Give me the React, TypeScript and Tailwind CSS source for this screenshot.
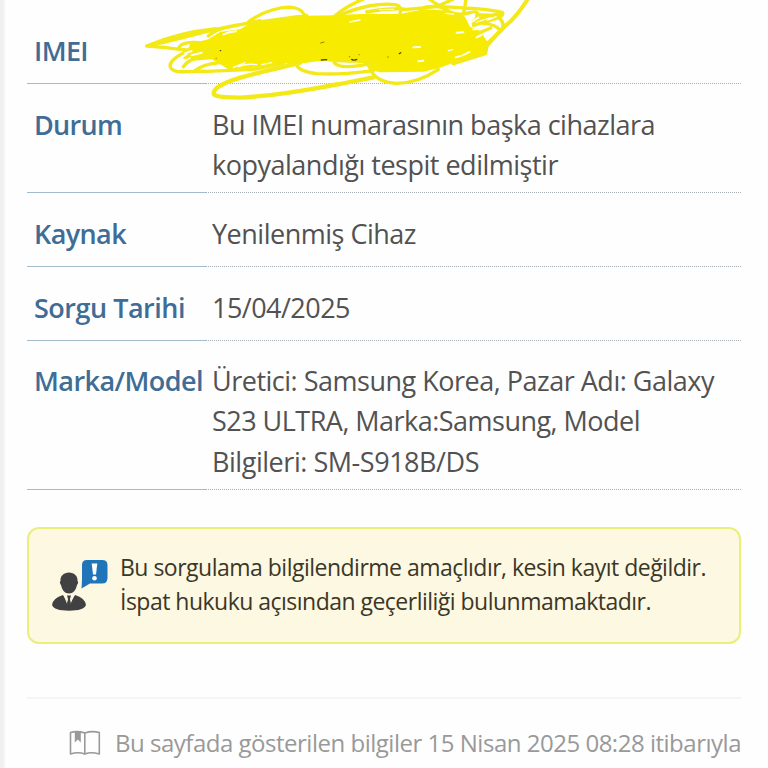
import React from "react";

type RowProps = { label: string; labelWidth: number; height: string; pad: string; lines: { text: string; width: number }[] };

// Text stretched or squeezed to a fixed measure
function Fit({ text, width }: { text: string; width: number }) {
  const ref = React.useRef<HTMLSpanElement>(null);
  const [spacing, setSpacing] = React.useState(0);
  React.useLayoutEffect(() => {
    if (ref.current) {
      setSpacing((width - ref.current.getBoundingClientRect().width) / text.length);
    }
  }, [text, width]);
  return (
    <span ref={ref} className="inline-block whitespace-nowrap" style={{ letterSpacing: spacing }}>
      {text}
    </span>
  );
}

function Row({ label, labelWidth, height, pad, lines }: RowProps) {
  return (
    <div className={`flex text-[27px] leading-[40px] ${height}`}>
      <div className={`w-[179px] border-b border-[#a3bccd] pl-[7px] font-semibold text-[#3f6d96] ${pad}`}>
        <Fit text={label} width={labelWidth} />
      </div>
      <div className={`flex-1 border-b border-dotted border-[#a3adb3] pl-[6px] text-[#525252] ${pad}`}>
        {lines.map((l) => (
          <div key={l.text} className="h-[40.4px]">
            <Fit text={l.text} width={l.width} />
          </div>
        ))}
      </div>
    </div>
  );
}

function Scribble() {
  return (
    <svg className="absolute left-[140px] top-0" width="400" height="104" viewBox="0 0 1200 312" fill="none" stroke="#f3e916" strokeWidth="10" strokeLinecap="round" strokeLinejoin="round">
      <path fill="#f7ec00" stroke="none" d="M150 132L205 118L240 96L300 88L330 70L420 58L500 47L580 46L660 42L780 42L850 28L930 32L975 50L990 80L1020 92L1042 125L1040 162L985 172L900 203L850 215L720 217L690 210L672 190L620 186L545 182L470 192L420 190L340 203L265 208L240 192L215 178L160 182L140 160Z" />
      <path d="M228 86C160 93 90 108 20 138C70 140 105 148 150 150M20 138C110 122 200 90 300 74L500 46M325 66C370 32 430 16 465 24Q490 30 494 50M118 140Q130 124 180 128M205 108Q225 90 260 82L360 62M150 150C110 166 80 190 94 206S140 212 200 214L340 208L430 190M135 175Q165 152 215 148M130 200Q150 172 210 165M165 212Q190 192 240 188" />
      <path strokeWidth="13" d="M480 188C380 215 270 232 230 264C208 288 225 293 300 293C430 286 520 265 600 252L700 232" />
      <path d="M470 196Q480 216 530 221C600 225 650 218 700 212M580 182Q584 200 620 200T700 188M560 178Q600 185 670 182M690 205C700 230 725 248 770 250C830 250 870 225 895 208" />
      <path d="M585 48C610 24 640 10 672 -4M600 46C660 18 725 8 765 14Q788 18 780 42M680 36Q760 22 800 28L890 20L945 -5M865 -5C890 15 925 30 960 64M905 20L1010 26Q1070 32 1088 38Q1092 50 1060 58L1000 76M978 -5L974 25L965 60M840 26Q890 10 920 30T990 38T1000 70M1010 45Q1065 42 1080 56T1085 90L1042 130M1088 42Q1040 45 1000 64M1010 102L1052 84M1030 70Q1065 72 1080 90" />
      <path strokeWidth="12" d="M1165 -5C1140 34 1118 62 1095 78Q1068 105 1040 138L1036 160L940 190" />
      <g stroke="#fffef2" strokeWidth="6">
        <path d="M250 103Q268 96 288 94M135 160L155 153M155 166L185 158M112 196Q120 184 138 179M152 198L172 187M820 142L840 141M950 98L970 97M1000 88L1017 87M835 184L850 182M948 172Q968 168 988 156M995 66L1015 53M1010 112L1024 105" />
        <path strokeWidth="4" d="M295 200Q320 190 350 194M365 194L395 188M280 202L315 188M630 66L660 60M720 29L760 28M1042 60Q1060 54 1068 50M918 40L940 42M980 50L985 65M925 152L938 149" />
      </g>
      <g stroke="#514b17" strokeWidth="4">
        <path d="M241 152h1M544 180L560 179M635 178Q642 183 650 178M778 161L782 158" />
        <path strokeWidth="2" d="M228 175h1M542 129L552 126M628 170h1M657 164h1M743 171h2" />
      </g>
    </svg>
  );
}

function AdvisorIcon() {
  return (
    <svg className="mt-[29px] shrink-0" width="56" height="54" viewBox="52 558 56 54">
      <path fill="#2075b9" d="M87 560H102Q107.500 560 107.500 565V578Q107.500 583.500 102 583.500H90L81.500 588.500L82 580V565Q82 560 87 560Z" />
      <path fill="#fff" d="M91.700 563.500H97.300L96 574.500H93Z" />
      <circle cx="94.500" cy="578.300" r="2.300" fill="#fff" />
      <path fill="#414143" d="M69 572.500C74 572.500 78 576 77.500 581Q79 582 77 585C76 590 73 593.500 69 593.500S62 590 61 585Q59 582 60.500 581C60 576 64 572.500 69 572.500Z" />
      <path fill="#414143" d="M63 595L69 604L75 595Q85 598 86 605Q84 610.700 69 610.700T52 605Q53 598 63 595Z" />
      <path fill="#fff8e0" d="M63.500 595L66 595L67.500 605ZM74.500 595L72 595L70 605Z" />
      <path fill="#414143" d="M67 595.500H71L70 599L71 606L69 609L67 606L68 599Z" />
    </svg>
  );
}

function BookIcon() {
  return (
    <svg className="mr-[14px] mt-[30px] shrink-0" width="32" height="28" viewBox="69 729 32 28" fill="none" stroke="#999" strokeWidth="1.6" strokeLinejoin="round">
      <path d="M84.800 733Q77 730.500 70.500 732.500V754Q78 751.500 84.800 754Q91 751.500 99.300 754V732.500Q92 730.500 84.800 733ZM84.800 733V754" />
      <path fill="#999" stroke="none" d="M74.800 732H80.800V742.500L77.800 739.500L74.800 742.500Z" />
    </svg>
  );
}

export default function App() {
  return (
    <main className="relative h-[768px] w-[768px] overflow-hidden bg-[#fefefe] pl-[27px] pr-[27px] font-['Open_Sans',sans-serif]">
      <Row label="IMEI" labelWidth={54} height="h-[84px]" pad="pt-[31px]" lines={[]} />
      <Row label="Durum" labelWidth={88} height="h-[109px]" pad="pt-[21px]" lines={[{ text: "Bu IMEI numarasının başka cihazlara", width: 443 }, { text: "kopyalandığı tespit edilmiştir", width: 346 }]} />
      <Row label="Kaynak" labelWidth={92} height="h-[74px]" pad="pt-[21px]" lines={[{ text: "Yenilenmiş Cihaz", width: 204 }]} />
      <Row label="Sorgu Tarihi" labelWidth={151} height="h-[74px]" pad="pt-[21px]" lines={[{ text: "15/04/2025", width: 138 }]} />
      <Row label="Marka/Model" labelWidth={169} height="h-[149px]" pad="pt-[20px]" lines={[{ text: "Üretici: Samsung Korea, Pazar Adı: Galaxy", width: 502 }, { text: "S23 ULTRA, Marka:Samsung, Model", width: 428 }, { text: "Bilgileri: SM-S918B/DS", width: 267 }]} />
      <section className="mt-[37px] flex h-[117px] rounded-[12px] border-2 border-[#e8ef7b] bg-[#fdf8e1] pl-[23px]">
        <AdvisorIcon />
        <div className="ml-[12px] pt-[21px] text-[23px] leading-[34px] text-[#3b3728]">
          <div><Fit text="Bu sorgulama bilgilendirme amaçlıdır, kesin kayıt değildir." width={586} /></div>
          <div><Fit text="İspat hukuku açısından geçerliliği bulunmamaktadır." width={531} /></div>
        </div>
      </section>
      <footer className="mt-[53px] flex border-t-2 border-[#f5f5f5] pl-[42px] text-[24px] leading-[36px] text-[#999]">
        <BookIcon />
        <div className="pt-[26px]"><Fit text="Bu sayfada gösterilen bilgiler 15 Nisan 2025 08:28 itibarıyla" width={626} /></div>
      </footer>
      <div className="absolute left-0 top-0 h-full w-[6px] bg-linear-to-r from-[#f0f0f0] from-50% to-[#fefefe]" />
      <div className="absolute left-0 top-0"><Scribble /></div>
    </main>
  );
}
